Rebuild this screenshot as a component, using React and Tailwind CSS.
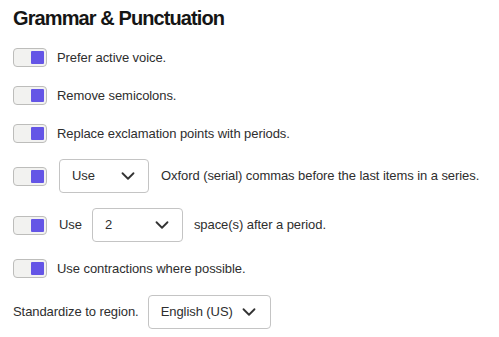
import React from "react";

function Toggle() {
  return (
    <div className="w-[34px] h-[19px] shrink-0 rounded-[4px] border border-[#bdbdbb] bg-[#f2f2f0] flex items-center justify-end pr-[2px]">
      <div className="w-[13px] h-[13px] rounded-[1px] bg-[#6455e6]" />
    </div>
  );
}

function Chevron() {
  return (
    <svg width="22" height="22" viewBox="0 0 24 24" fill="none" stroke="#333" strokeWidth="2" strokeLinecap="round" strokeLinejoin="round" className="shrink-0">
      <path d="m6 9 6 6 6-6" />
    </svg>
  );
}

function Select({ value, width }) {
  return (
    <div className={`h-[34px] shrink-0 rounded-[4px] border border-[#c4c4c4] bg-white flex items-center justify-between pl-[12px] pr-[9px] gap-[5px] ${width}`}>
      <span>{value}</span>
      <Chevron />
    </div>
  );
}

export default function App() {
  return (
    <div
      className="w-[499px] h-[337px] bg-white px-[13px] text-[13px] tracking-[-0.07px] text-[#2e2e2e] flex flex-col whitespace-nowrap"
      style={{ fontFamily: "'Liberation Sans', Arial, sans-serif" }}
    >
      <h1 className="mt-[4px] h-[28px] leading-[28px] text-[20px] font-bold text-[#151515] tracking-[-0.9px]">
        Grammar &amp; Punctuation
      </h1>
      <div className="mt-[16px] flex items-center gap-[10px] h-[19px]">
        <Toggle />
        <span>Prefer active voice.</span>
      </div>
      <div className="mt-[19px] flex items-center gap-[10px] h-[19px]">
        <Toggle />
        <span>Remove semicolons.</span>
      </div>
      <div className="mt-[19px] flex items-center gap-[10px] h-[19px]">
        <Toggle />
        <span>Replace exclamation points with periods.</span>
      </div>
      <div className="mt-[16px] flex items-center h-[34px]">
        <Toggle />
        <div className="ml-[12px]">
          <Select value="Use" width="w-[90px]" />
        </div>
        <span className="ml-[12px]">Oxford (serial) commas before the last items in a series.</span>
      </div>
      <div className="mt-[15px] flex items-center h-[34px]">
        <Toggle />
        <span className="ml-[12px]">Use</span>
        <div className="ml-[10px]">
          <Select value="2" width="w-[91px]" />
        </div>
        <span className="ml-[11px]">space(s) after a period.</span>
      </div>
      <div className="mt-[17px] flex items-center gap-[10px] h-[19px]">
        <Toggle />
        <span>Use contractions where possible.</span>
      </div>
      <div className="mt-[17px] flex items-center gap-[9px] h-[34px]">
        <span>Standardize to region.</span>
        <div className="h-[34px] shrink-0 rounded-[4px] border border-[#c4c4c4] bg-white flex items-center pl-[12px] pr-[10px] gap-[5px]">
          <span>English (US)</span>
          <Chevron />
        </div>
      </div>
    </div>
  );
}
